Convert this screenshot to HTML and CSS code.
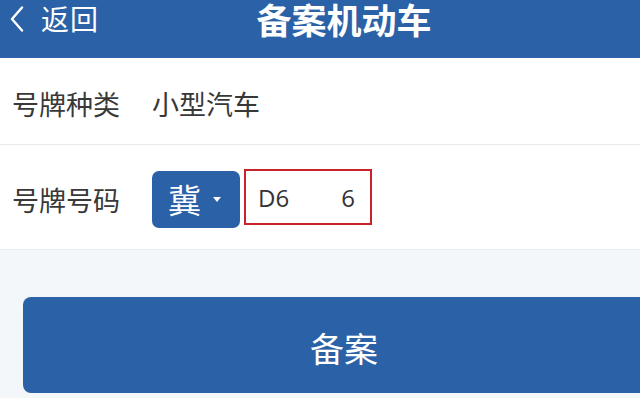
FILE: index.html
```html
<!DOCTYPE html>
<html lang="zh-CN">
<head>
<meta charset="utf-8">
<title>备案机动车</title>
<link rel="stylesheet" href="styles.css">
</head>
<body>
<div class="app">
  <header class="topbar">
    <a class="back" href="#">
      <svg class="chev" width="14" height="26" viewBox="0 0 14 26"><polyline points="12,1.5 2,13 12,24.5" fill="none" stroke="#fff" stroke-width="2.4" stroke-linecap="round" stroke-linejoin="round"/></svg>
      <span class="back-text">返回</span>
    </a>
    <h1 class="title">备案机动车</h1>
    <div class="spacer"></div>
  </header>
  <section class="form">
    <div class="row row-type">
      <span class="label">号牌种类</span>
      <span class="value">小型汽车</span>
    </div>
    <div class="row row-num">
      <span class="label">号牌号码</span>
      <div class="plate">
        <button class="province" type="button"><span class="prov-text">冀</span><span class="caret"></span></button>
        <div class="plate-input"><span class="p1">D6</span><span class="p2">6</span></div>
      </div>
    </div>
  </section>
  <div class="actions">
    <button class="submit" type="button">备案</button>
  </div>
</div>
</body>
</html>
```

FILE: styles.css
```css
html, body {
  margin: 0;
  padding: 0;
  background: #f4f7fa;
  overflow: hidden;
}
body {
  font-family: "Noto Sans CJK SC", "Noto Sans", sans-serif;
  color: #333;
}
.app {
  width: 688px;
  height: 398px;
  background: #f4f7fa;
}
.topbar {
  height: 58px;
  background: #2b61a6;
  display: grid;
  grid-template-columns: 1fr auto 1fr;
  align-items: start;
  color: #fff;
}
.back {
  display: flex;
  align-items: center;
  height: 36px;
  padding-left: 10px;
  color: #fff;
  text-decoration: none;
}
.chev {
  display: block;
  margin-top: 1px;
}
.back-text {
  font-size: 28px;
  line-height: 36px;
  margin-left: 17px;
  letter-spacing: 1px;
}
.title {
  margin: 0;
  font-size: 35px;
  font-weight: 700;
  line-height: 38px;
}
.form {
  background: #fff;
}
.row {
  display: flex;
  align-items: center;
  padding-left: 12px;
  border-bottom: 1px solid #e6e9ee;
  box-sizing: border-box;
}
.row-type {
  height: 87px;
}
.row-num {
  height: 105px;
}
.label {
  font-size: 27px;
  line-height: 36px;
  width: 140px;
  color: #383838;
  padding-top: 6px;
}
.value {
  font-size: 27px;
  line-height: 36px;
  color: #383838;
  padding-top: 6px;
}
.plate {
  display: flex;
  align-items: center;
  gap: 4px;
}
.province {
  width: 88px;
  height: 57px;
  margin-top: 4px;
  border: none;
  border-radius: 7px;
  background: #2b61a6;
  color: #fff;
  display: flex;
  align-items: center;
  padding: 0 0 0 16px;
  font-family: "Noto Sans CJK SC", sans-serif;
}
.prov-text {
  font-size: 33px;
  line-height: 40px;
}
.caret {
  width: 0;
  height: 0;
  border-left: 4px solid transparent;
  border-right: 4px solid transparent;
  border-top: 5px solid #fff;
  margin-left: 12px;
}
.plate-input {
  width: 128px;
  height: 56px;
  box-sizing: border-box;
  border: 2px solid #c8232b;
  display: flex;
  align-items: center;
  padding-left: 12px;
  font-family: "Open Sans", "Noto Sans", sans-serif;
  font-size: 24px;
  color: #333;
}
.p2 {
  margin-left: 52px;
}
.actions {
  padding: 47px 23px 0;
}
.submit {
  display: block;
  width: 100%;
  height: 96px;
  border: none;
  border-radius: 8px;
  background: #2b61a6;
  color: #fff;
  font-family: "Noto Sans CJK SC", sans-serif;
  font-size: 34px;
  line-height: 40px;
  padding: 6px 0 0;
}
```
